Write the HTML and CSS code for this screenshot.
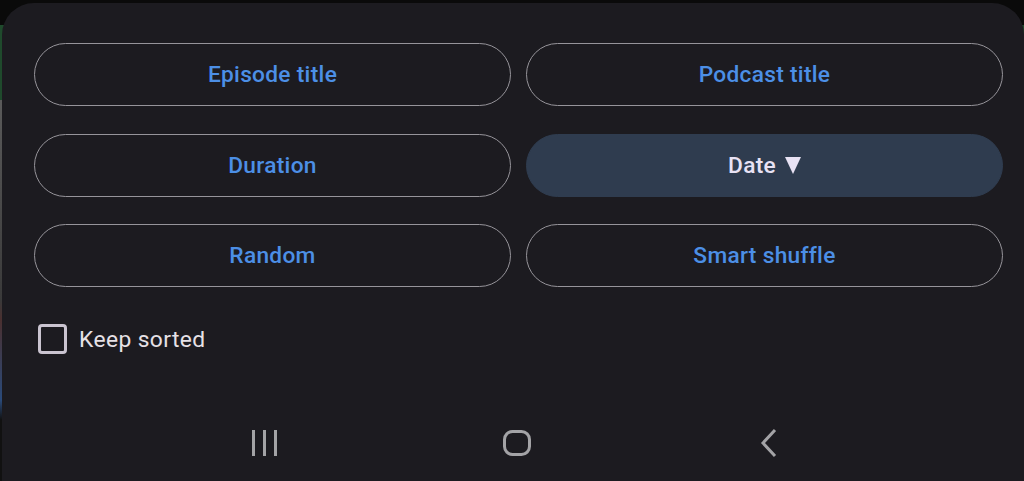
FILE: index.html
```html
<!DOCTYPE html>
<html lang="en">

<head>
    <meta charset="UTF-8">
    <title>Sort episodes</title>
    <link rel="stylesheet" href="styles.css">
</head>

<body>
    <div class="sheet">
        <div class="sort-options">
            <button class="sort-btn">Episode title</button>
            <button class="sort-btn">Podcast title</button>
            <button class="sort-btn">Duration</button>
            <button class="sort-btn selected">Date
                <svg class="arrow" width="16" height="18" viewBox="0 0 16 18">
                    <path d="M0 1h16L8 18z" fill="#e8e2f4" />
                </svg>
            </button>
            <button class="sort-btn">Random</button>
            <button class="sort-btn">Smart shuffle</button>
        </div>

        <label class="keep-sorted">
            <span class="checkbox"></span>
            Keep sorted
        </label>

        <div class="nav-bar">
            <svg class="nav-icon" width="28" height="30" viewBox="0 0 28 30">
                <path d="M2.5 2v26M13.5 2v26M24.5 2v26" stroke="#a3a3a6" stroke-width="3" fill="none" />
            </svg>
            <svg class="nav-icon" width="30" height="30" viewBox="0 0 30 30">
                <rect x="2.5" y="3.5" width="25" height="23" rx="8" stroke="#a3a3a6" stroke-width="3" fill="none" />
            </svg>
            <svg class="nav-icon" width="20" height="30" viewBox="0 0 20 30">
                <path d="M16 2L4 15l12 13" stroke="#a3a3a6" stroke-width="3" fill="none" />
            </svg>
        </div>
    </div>
</body>

</html>
```

FILE: styles.css
```css
body {
    margin: 0;
    padding: 3px 0 0 2px;
    height: 481px;
    box-sizing: border-box;
    background: linear-gradient(#0a0a0a 0, #0a0a0a 25px, #1f4a2c 25px, #1f4a2c 100px, #5a5a5a 100px, #3a3a3a 300px, #4a3030 320px, #2a4a7a 400px, #111 420px);
    font-family: Roboto, "Noto Sans", sans-serif;
    overflow: hidden;
}

.sheet {
    background-color: #1c1b20;
    border-radius: 32px 32px 0 0;
    height: 478px;
    padding: 40px 21px 0 32px;
    box-sizing: border-box;
    position: relative;
}

.sort-options {
    display: grid;
    grid-template-columns: 1fr 1fr;
    column-gap: 15px;
    row-gap: 27.5px;
}

.sort-btn {
    height: 63px;
    border: 1px solid #96949a;
    border-radius: 32px;
    background: transparent;
    color: #4c8fe6;
    font-family: Roboto, sans-serif;
    font-size: 22.7px;
    font-weight: 500;
    letter-spacing: 0.3px;
    cursor: pointer;
}

.sort-btn.selected {
    background-color: #2f3c4f;
    border-color: #2f3c4f;
    color: #e8e2f4;
}

.arrow {
    margin-left: 3px;
    vertical-align: -1px;
}

.keep-sorted {
    display: flex;
    align-items: center;
    gap: 12px;
    margin: 37px 0 0 4px;
    color: #e6e1e6;
    font-size: 22.8px;
    letter-spacing: 0.4px;
}

.checkbox {
    flex-shrink: 0;
    width: 23px;
    height: 24px;
    border: 3px solid #cac4d0;
    border-radius: 4px;
}

.nav-bar {
    position: absolute;
    left: 0;
    right: 0;
    bottom: 23px;
    display: flex;
    align-items: center;
    padding-left: 249px;
}

.nav-icon:nth-child(2) {
    margin-left: 223px;
}

.nav-icon:nth-child(3) {
    margin-left: 227px;
}
```
